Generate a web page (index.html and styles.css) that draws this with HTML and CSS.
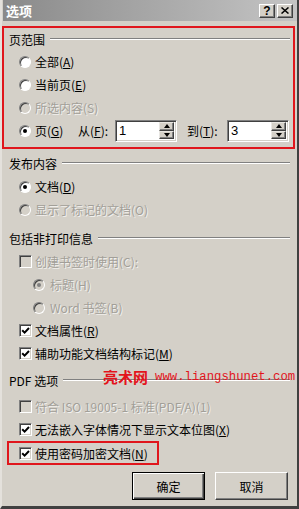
FILE: index.html
```html
<!DOCTYPE html>
<html>
<head>
<meta charset="utf-8">
<link rel="stylesheet" href="styles.css">
</head>
<body>
<div class="window">
  <div class="titlebar">
    <span class="title">选项</span>
    <div class="tbtns">
      <span class="tbtn help">?</span>
      <span class="tbtn close"><svg width="8" height="7" viewBox="0 0 8 7"><path d="M0.5 0.5 L7.5 6.5 M7.5 0.5 L0.5 6.5" stroke="#000" stroke-width="1.5" fill="none"/></svg></span>
    </div>
  </div>
  <div class="content">
    <section class="group mark">
      <div class="ghead"><span>页范围</span><i class="line"></i></div>
      <div class="row"><span class="radio"></span><span>全部(<u>A</u>)</span></div>
      <div class="row"><span class="radio"></span><span>当前页(<u>E</u>)</span></div>
      <div class="row dis"><span class="radio"></span><span>所选内容(S)</span></div>
      <div class="row">
        <span class="radio on"></span><span class="lbl-g">页(<u>G</u>)</span>
        <span class="lbl-from">从(<u>F</u>):</span>
        <span class="spin"><span class="val">1</span><span class="arrows"><span class="ab up"></span><span class="ab down"></span></span></span>
        <span class="lbl-to">到(<u>T</u>):</span>
        <span class="spin"><span class="val">3</span><span class="arrows"><span class="ab up"></span><span class="ab down"></span></span></span>
      </div>
    </section>

    <section class="group g2">
      <div class="ghead"><span>发布内容</span><i class="line"></i></div>
      <div class="row"><span class="radio on"></span><span>文档(<u>D</u>)</span></div>
      <div class="row dis"><span class="radio"></span><span>显示了标记的文档(O)</span></div>
    </section>

    <section class="group g3">
      <div class="ghead"><span>包括非打印信息</span><i class="line"></i></div>
      <div class="row dis"><span class="check"></span><span>创建书签时使用(C):</span></div>
      <div class="row dis indent"><span class="radio on"></span><span>标题(H)</span></div>
      <div class="row dis indent"><span class="radio"></span><span>Word 书签(B)</span></div>
      <div class="row"><span class="check on"><svg width="9" height="9" viewBox="0 0 9 9"><path d="M1.2 4.2 L3.6 6.6 L8 2" stroke="#000" stroke-width="2" fill="none"/></svg></span><span>文档属性(<u>R</u>)</span></div>
      <div class="row"><span class="check on"><svg width="9" height="9" viewBox="0 0 9 9"><path d="M1.2 4.2 L3.6 6.6 L8 2" stroke="#000" stroke-width="2" fill="none"/></svg></span><span>辅助功能文档结构标记(<u>M</u>)</span></div>
    </section>

    <section class="group g4">
      <div class="ghead"><span>PDF 选项</span><i class="line"></i></div>
      <div class="row dis"><span class="check"></span><span>符合 ISO 19005-1 标准(PDF/A)(1)</span></div>
      <div class="row"><span class="check on"><svg width="9" height="9" viewBox="0 0 9 9"><path d="M1.2 4.2 L3.6 6.6 L8 2" stroke="#000" stroke-width="2" fill="none"/></svg></span><span>无法嵌入字体情况下显示文本位图(<u>X</u>)</span></div>
      <div class="row hl"><span class="check on"><svg width="9" height="9" viewBox="0 0 9 9"><path d="M1.2 4.2 L3.6 6.6 L8 2" stroke="#000" stroke-width="2" fill="none"/></svg></span><span>使用密码加密文档(<u>N</u>)</span></div>
    </section>

    <div class="buttons">
      <button class="btn default">确定</button>
      <button class="btn">取消</button>
    </div>
  </div>
  <div class="watermark"><span class="wm-cn">亮术网</span><span class="wm-url">www.liangshunet.com</span></div>
</div>
</body>
</html>
```

FILE: styles.css
```css
* { box-sizing: border-box; }
html, body { margin: 0; padding: 0; }
body {
  width: 299px;
  height: 509px;
  overflow: hidden;
  background: #d4d0c8;
  font-family: "Noto Sans CJK SC", "Liberation Sans", sans-serif;
  font-size: 12px;
  color: #000;
}
.window {
  position: relative;
  width: 299px;
  height: 509px;
  background: #d4d0c8;
  border-left: 2px solid #e4e1dc;
  border-right: 2px solid #404040;
  border-bottom: 3px solid #404040;
  display: flex;
  flex-direction: column;
}
.titlebar {
  height: 21px;
  flex: none;
  display: flex;
  align-items: center;
  margin-left: 1px;
  background: linear-gradient(to right, #8a8a8a, #c4c4c4);
}
.title {
  color: #fff;
  font-weight: bold;
  font-size: 13px;
  padding-left: 3px;
  line-height: 21px;
}
.tbtns {
  margin-left: auto;
  display: flex;
  gap: 2px;
  padding-right: 4px;
}
.tbtn {
  width: 16px;
  height: 14px;
  background: #d4d0c8;
  border: 1px solid;
  border-color: #fff #404040 #404040 #fff;
  box-shadow: inset -1px -1px #808080;
  display: flex;
  align-items: center;
  justify-content: center;
}
.help {
  font-family: "Liberation Sans", sans-serif;
  font-weight: bold;
  font-size: 12px;
  line-height: 12px;
}
.content {
  flex: 1;
  padding-top: 5px;
  display: flex;
  flex-direction: column;
}
.group { padding: 0 7px 0 0; }
.ghead {
  height: 24px;
  display: flex;
  align-items: center;
  padding-left: 7px;
}
.line {
  flex: 1;
  height: 0;
  margin-left: 5px;
  border-top: 1px solid #808080;
  border-bottom: 1px solid #fff;
}
.row {
  height: 23px;
  display: flex;
  align-items: center;
  padding-left: 17px;
  white-space: nowrap;
}
.row.indent { padding-left: 31px; }
.row.indent .radio { margin-right: 5px; }

.mark {
  border: 2px solid #e0161c;
  margin-right: 2px;
  padding: 0 3px 5px 0;
}
.mark .ghead { height: 22px; padding-left: 5px; }
.mark .row { padding-left: 15px; }
.g2 { margin-top: 2px; }
.g3 { margin-top: 5px; }
.g4 { margin-top: 3px; }
.g4 .ghead { margin-bottom: 3px; }

.row.hl {
  height: 24px;
  width: 152px;
  margin-left: 5px;
  padding-left: 10px;
  border: 2px solid #e0161c;
}

u { text-decoration: underline; text-underline-offset: 1px; }

.radio {
  width: 12px;
  height: 12px;
  flex: none;
  margin-right: 4px;
  border-radius: 50%;
  background: #fff;
  border: 1px solid;
  border-color: #808080 #fff #fff #808080;
  box-shadow: inset 1px 1px #404040;
  display: flex;
  align-items: center;
  justify-content: center;
}
.radio.on::after {
  content: "";
  width: 4px;
  height: 4px;
  border-radius: 50%;
  background: #000;
}
.check {
  width: 13px;
  height: 13px;
  flex: none;
  margin-right: 3px;
  background: #fff;
  border: 1px solid;
  border-color: #808080 #fff #fff #808080;
  box-shadow: inset 1px 1px #404040, inset -1px -1px #d4d0c8;
  display: flex;
  align-items: center;
  justify-content: center;
}
.dis { color: #a29f98; text-shadow: 1px 1px 0 rgba(255,255,255,0.7); }
.dis .radio, .dis .check { background: #d4d0c8; }
.dis .radio.on::after { background: #808080; }

.lbl-g { width: 43px; }
.lbl-from { width: 37px; }
.lbl-to { width: 40px; margin-left: 10px; }
.spin {
  width: 62px;
  height: 22px;
  flex: none;
  background: #fff;
  border: 1px solid;
  border-color: #808080 #fff #fff #808080;
  box-shadow: inset 1px 1px #404040, inset -1px -1px #d4d0c8;
  display: flex;
  align-items: center;
  padding: 2px 2px 2px 3px;
}
.val {
  flex: 1;
  font-family: "Liberation Sans", sans-serif;
  font-size: 13px;
}
.arrows {
  width: 15px;
  height: 17px;
  display: flex;
  flex-direction: column;
}
.ab {
  flex: 1;
  background: #d4d0c8;
  border: 1px solid;
  border-color: #e8e6e2 #404040 #404040 #e8e6e2;
  box-shadow: inset -1px -1px #808080;
  display: flex;
  align-items: center;
  justify-content: center;
}
.ab::after {
  content: "";
  width: 0;
  height: 0;
  border-left: 3.5px solid transparent;
  border-right: 3.5px solid transparent;
}
.ab.up::after { border-bottom: 4px solid #000; }
.ab.down::after { border-top: 4px solid #000; }

.buttons {
  margin-top: 7px;
  display: flex;
  justify-content: flex-end;
  gap: 10px;
  padding-right: 9px;
}
.btn {
  width: 73px;
  height: 28px;
  font-family: "Noto Sans CJK SC", sans-serif;
  font-size: 12px;
  color: #000;
  background: #d4d0c8;
  border: 1px solid;
  border-color: #fff #404040 #404040 #fff;
  box-shadow: inset -1px -1px #808080;
  padding: 0;
}
.btn.default {
  border: 1px solid #000;
  box-shadow: inset 1px 1px #fff, inset -1px -1px #404040, inset -2px -2px #808080;
}

.watermark {
  position: absolute;
  left: 101px;
  top: 366px;
  display: flex;
  align-items: center;
  color: #e3141c;
  white-space: nowrap;
}
.wm-cn {
  font-size: 15px;
  font-weight: bold;
  margin-right: 7px;
}
.wm-url {
  font-family: "Liberation Mono", monospace;
  font-size: 12.3px;
}
```
